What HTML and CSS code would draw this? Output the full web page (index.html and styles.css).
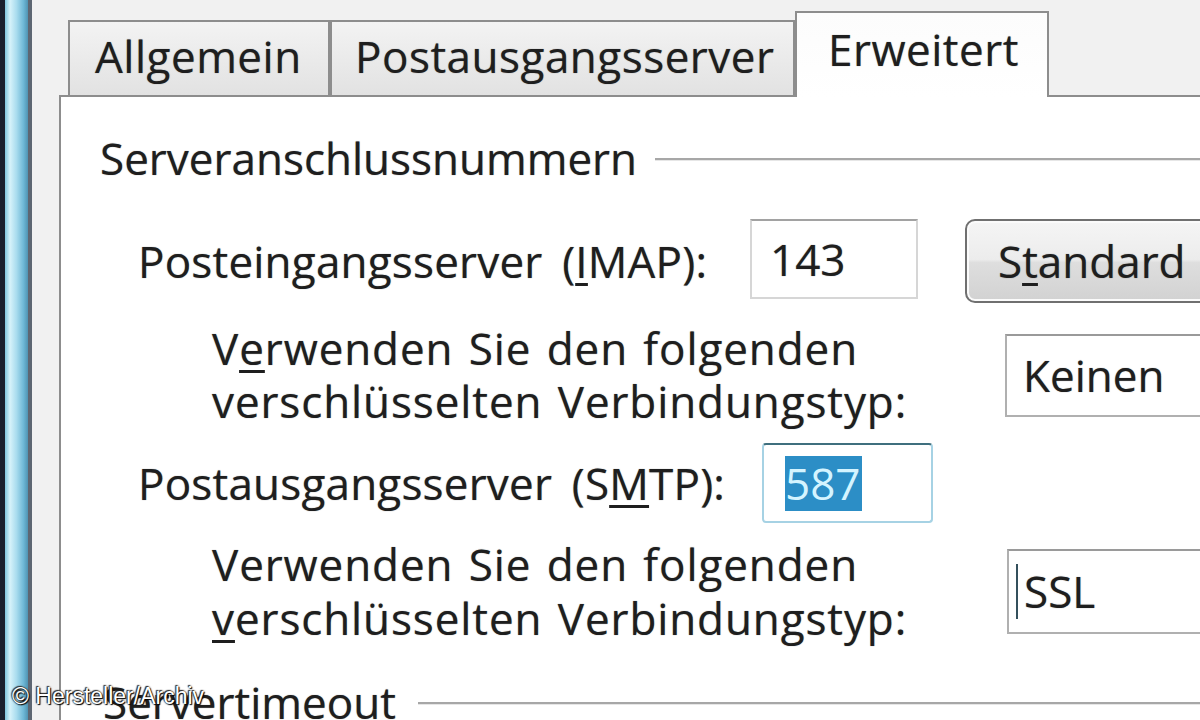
FILE: index.html
```html
<!DOCTYPE html>
<html lang="de">
<head>
<meta charset="utf-8">
<title>Kontoeinstellungen – Erweitert</title>
<link rel="stylesheet" href="styles.css">
</head>
<body>
<div class="screen">
  <div class="chrome">
    <div class="chrome-dark"></div>
    <div class="chrome-glass"></div>
    <div class="chrome-edge"></div>
  </div>
  <div class="dialog">
    <div class="tabs">
      <div class="tab tab-general">Allgemein</div>
      <div class="tab tab-out">Postausgangsserver</div>
      <div class="tab tab-adv active">Erweitert</div>
    </div>
    <div class="panel">
      <div class="group-head">
        <span class="group-title">Serveranschlussnummern</span>
        <span class="rule"></span>
      </div>

      <div class="row row-imap">
        <div class="lbl lbl-imap">Posteingangsserver (<u>I</u>MAP):</div>
        <div class="field field-imap">143</div>
        <div class="btn">S<u>t</u>andard</div>
      </div>

      <div class="row row-enc">
        <div class="lbl2 lbl2-a">V<u>e</u>rwenden Sie den folgenden<br>verschlüsselten Verbindungstyp:</div>
        <div class="combo combo-a">Keinen</div>
      </div>

      <div class="row row-smtp">
        <div class="lbl lbl-smtp">Postausgangsserver (S<u>M</u>TP):</div>
        <div class="field field-smtp focused"><span class="sel">587</span></div>
      </div>

      <div class="row row-enc row-enc2">
        <div class="lbl2 lbl2-b">Verwenden Sie den folgenden<br><u>v</u>erschlüsselten Verbindungstyp:</div>
        <div class="combo combo-b"><span class="caret"></span>SSL</div>
      </div>

      <div class="group-head group-head-2">
        <span class="group-title">Servertimeout</span>
        <span class="rule"></span>
      </div>
    </div>
  </div>
  <div class="watermark">© Hersteller/Archiv</div>
</div>
</body>
</html>
```
FILE: styles.css
```css
html, body {
  margin: 0;
  padding: 0;
}
body {
  width: 1200px;
  height: 720px;
  overflow: hidden;
  background: #f1f1f1;
}
.screen {
  position: relative;
  display: flex;
  width: 1200px;
  height: 720px;
  overflow: hidden;
  font-family: "Open Sans", "Noto Sans", sans-serif;
  font-size: 44px;
  line-height: 53px;
  color: #1e1e1e;
  text-shadow: 0 0 1px rgba(20, 20, 20, 0.55);
}

/* left window chrome */
.chrome {
  display: flex;
  flex: 0 0 auto;
}
.chrome-dark {
  width: 5px;
  background: #1b1f2e;
}
.chrome-glass {
  width: 23px;
  background: linear-gradient(to right, #7fc4de 0%, #d6f2fa 22%, #a9dcee 50%, #6fb8d6 80%, #4f93b2 100%);
}
.chrome-edge {
  width: 4px;
  background: #5d6672;
}

/* dialog */
.dialog {
  flex: 1;
  display: flex;
  flex-direction: column;
  padding-left: 27px;
  min-width: 0;
}
.tabs {
  display: flex;
  align-items: flex-end;
  height: 84px;
  margin-top: 11px;
  padding-left: 9px;
  position: relative;
  z-index: 1;
  letter-spacing: 0.5px;
}
.tab {
  box-sizing: border-box;
  flex: none;
  height: 75px;
  padding-top: 8px;
  border: 2px solid #8d8d8d;
  border-bottom: none;
  background: linear-gradient(#f3f3f3, #e2e2e2);
  white-space: nowrap;
}
.tab-general {
  width: 262px;
  padding-left: 25px;
}
.tab-out {
  width: 465px;
  padding-left: 23px;
}
.tab-adv {
  width: 254px;
  padding-left: 31px;
}
.tab.active {
  height: 86px;
  margin-bottom: -2px;
  padding-top: 10px;
  background: linear-gradient(#fcfcfc, #ffffff);
}

.panel {
  flex: 1;
  border-top: 2px solid #8d8d8d;
  border-left: 2px solid #8d8d8d;
  background: #ffffff;
  padding-top: 35px;
  padding-left: 39px;
}

.group-head {
  display: flex;
  align-items: center;
  height: 53px;
}
.group-title {
  flex: none;
  white-space: nowrap;
}
.rule {
  flex: 1;
  height: 2px;
  margin-left: 18px;
  background: #a7a7a7;
  box-shadow: 0 1px 0 #e6e6e6;
}
.group-head-2 {
  margin-top: 31px;
  padding-left: 3px;
}
.group-head-2 .rule {
  margin-left: 22px;
}

.row {
  display: flex;
  align-items: flex-start;
  padding-left: 38px;
}
.lbl {
  flex: none;
  align-self: center;
  white-space: nowrap;
  letter-spacing: 0.2px;
  word-spacing: 8px;
}
.lbl-imap { width: 612px; }
.lbl-smtp { width: 624px; }

u {
  text-decoration-thickness: 3px;
  text-underline-offset: 5px;
}

.field {
  box-sizing: border-box;
  flex: none;
  height: 80px;
  border: 2px solid #d6d6d6;
  border-top-color: #a2a2a2;
  background: #ffffff;
  display: flex;
  align-items: center;
}
.field-imap {
  width: 168px;
  padding-left: 18px;
}
.field-smtp {
  width: 171px;
  padding-left: 21px;
}
.field.focused {
  border-color: #a6d2e4;
  border-top-color: #3f6f7e;
  border-radius: 4px;
}
.sel {
  background: #2c8ec6;
  color: #d4f4ff;
  text-shadow: none;
  line-height: 55px;
  padding-right: 2px;
}

.row-imap {
  margin-top: 34px;
}
.btn {
  box-sizing: border-box;
  flex: none;
  width: 280px;
  height: 84px;
  margin-left: 47px;
  padding-left: 31px;
  display: flex;
  align-items: center;
  border: 2px solid #707070;
  border-radius: 10px;
  background: linear-gradient(#f5f5f5 0%, #ececec 48%, #dedede 52%, #d2d2d2 100%);
  box-shadow: inset 0 0 0 2px #fbfbfb;
  white-space: nowrap;
}

.row-enc {
  margin-top: 19px;
  align-items: center;
  padding-left: 112px;
}
.lbl2 {
  flex: none;
  white-space: nowrap;
  letter-spacing: 0.9px;
  word-spacing: 3px;
}
.lbl2-a { width: 793px; }
.lbl2-b { width: 795px; line-height: 54px; }

.combo {
  box-sizing: border-box;
  flex: none;
  width: 260px;
  border: 2px solid #b0b0b0;
  border-top-color: #9a9a9a;
  background: #ffffff;
  display: flex;
  align-items: center;
  white-space: nowrap;
}
.combo-a {
  height: 83px;
  padding-left: 16px;
}
.combo-b {
  height: 85px;
  padding-left: 7px;
}
.caret {
  display: inline-block;
  width: 2px;
  height: 55px;
  background: #34505c;
  margin-right: 6px;
}

.row-smtp {
  margin-top: 15px;
}
.row-enc2 {
  margin-top: 14px;
}

.watermark {
  position: absolute;
  left: 12px;
  top: 685px;
  font-family: "Liberation Sans", Arial, sans-serif;
  font-size: 23px;
  line-height: 23px;
  color: #ffffff;
  text-shadow: 0 0 2px #000, 1px 1px 1px #000, -1px -1px 1px #333;
  white-space: nowrap;
}
```
